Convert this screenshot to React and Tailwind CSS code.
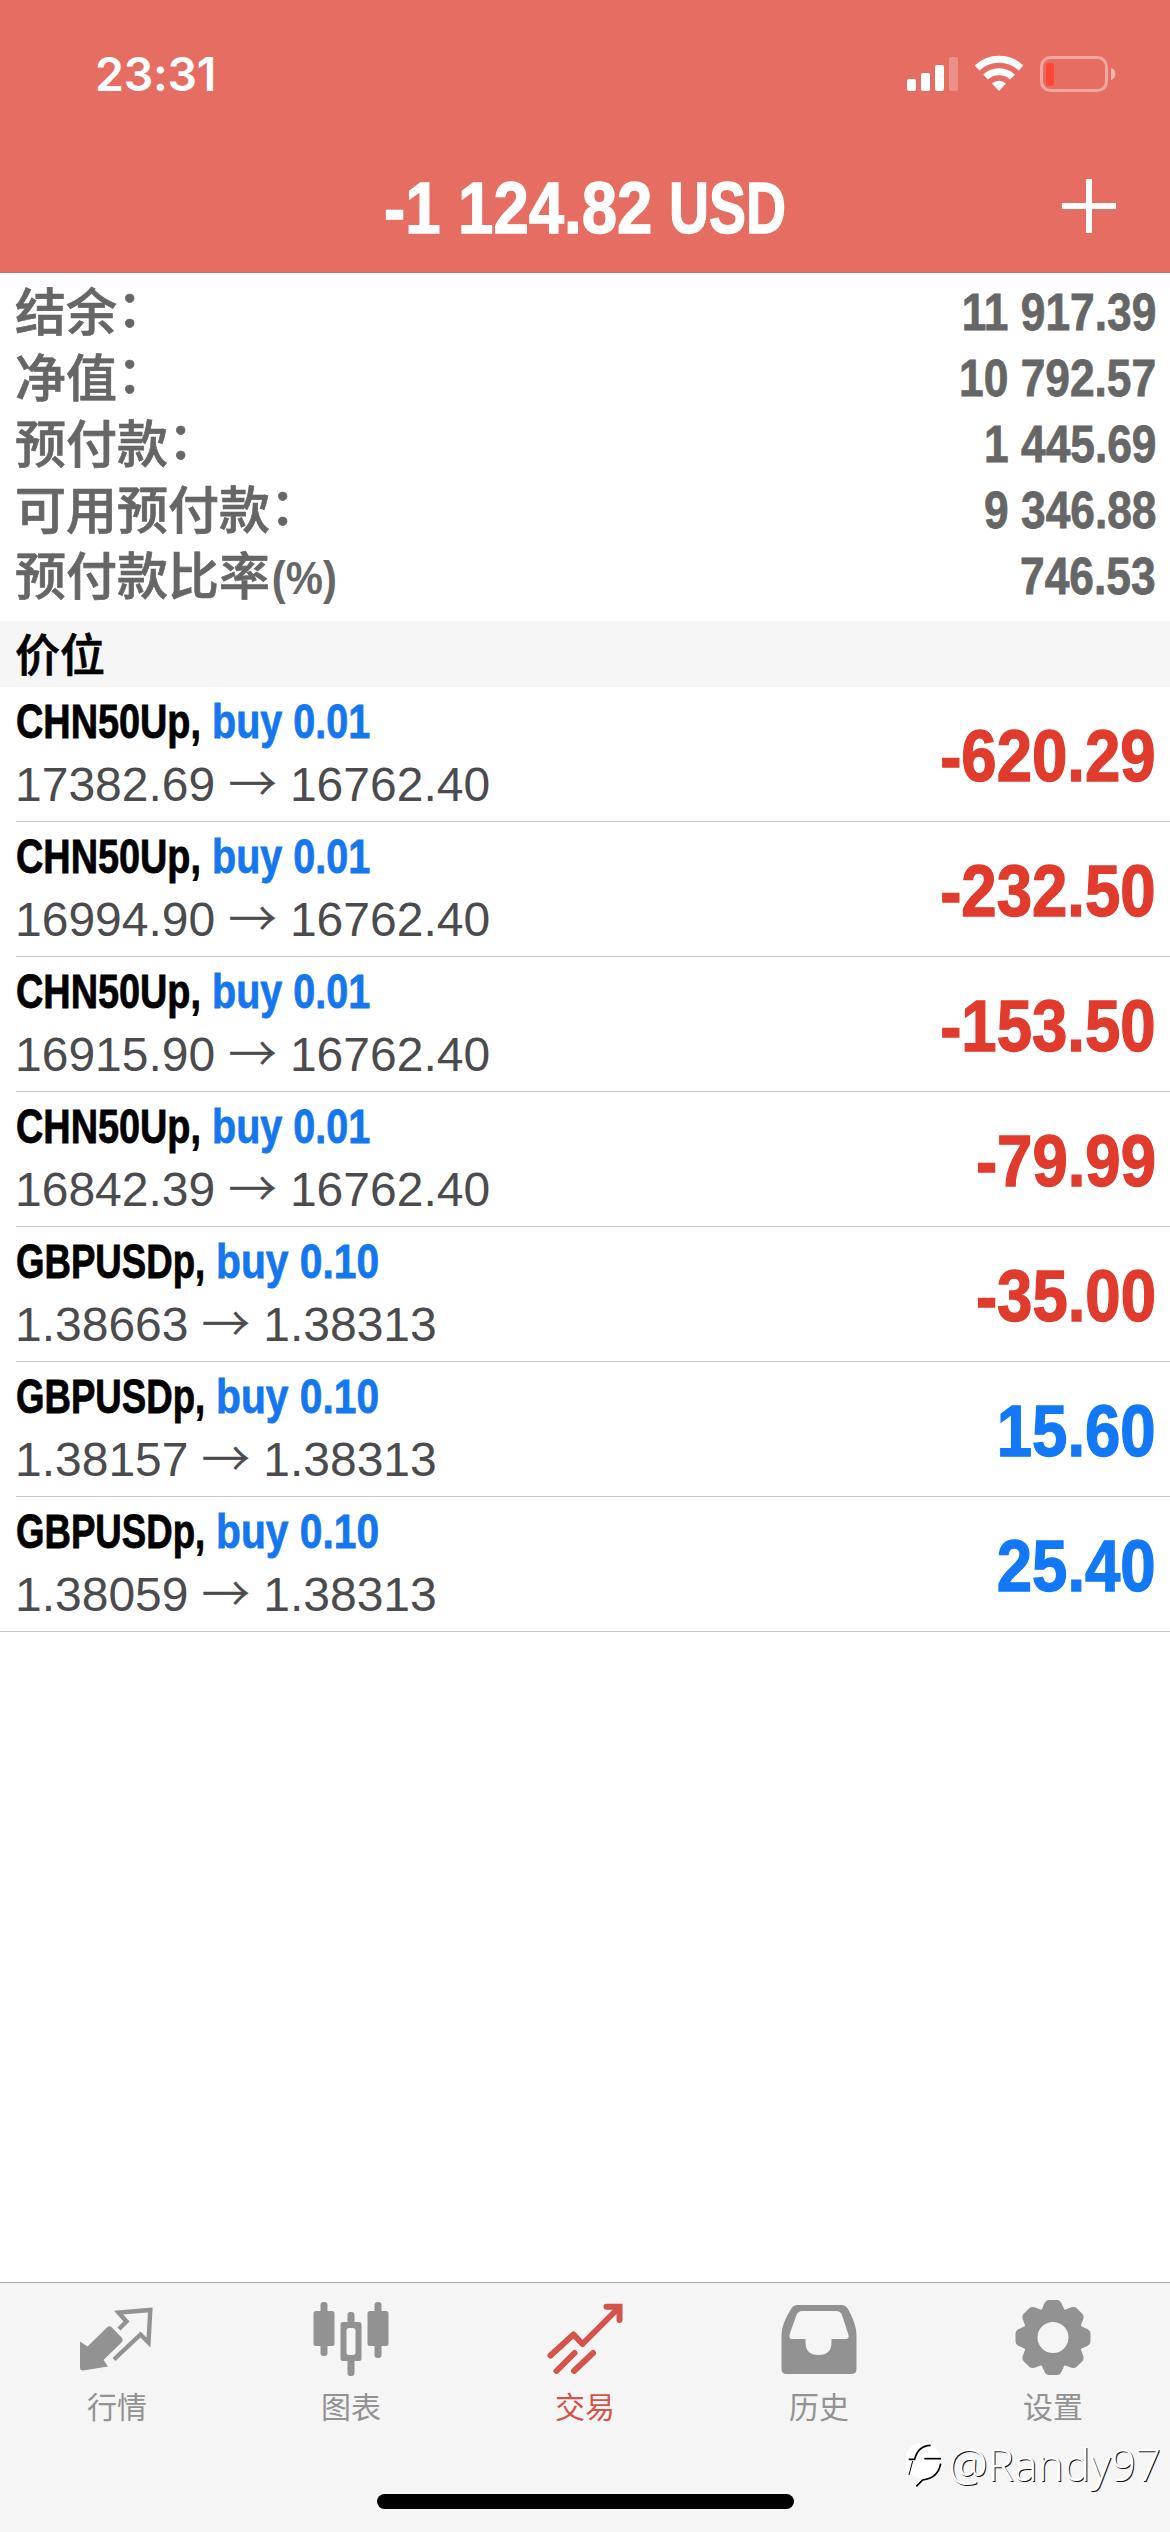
import React from 'react';

const summary = [
  { label: '结余', colon: true, value: '11 917.39' },
  { label: '净值', colon: true, value: '10 792.57' },
  { label: '预付款', colon: true, value: '1 445.69' },
  { label: '可用预付款', colon: true, value: '9 346.88' },
  { label: '预付款比率', suffix: '(%)', value: '746.53' },
];

const positions = [
  { symbol: 'CHN50Up,', side: 'buy 0.01', open: '17382.69', current: '16762.40', profit: '-620.29' },
  { symbol: 'CHN50Up,', side: 'buy 0.01', open: '16994.90', current: '16762.40', profit: '-232.50' },
  { symbol: 'CHN50Up,', side: 'buy 0.01', open: '16915.90', current: '16762.40', profit: '-153.50' },
  { symbol: 'CHN50Up,', side: 'buy 0.01', open: '16842.39', current: '16762.40', profit: '-79.99' },
  { symbol: 'GBPUSDp,', side: 'buy 0.10', open: '1.38663', current: '1.38313', profit: '-35.00' },
  { symbol: 'GBPUSDp,', side: 'buy 0.10', open: '1.38157', current: '1.38313', profit: '15.60' },
  { symbol: 'GBPUSDp,', side: 'buy 0.10', open: '1.38059', current: '1.38313', profit: '25.40' },
];

const StatusIcons = () => (
  <svg width="210" height="40" viewBox="906 54 210 40" fill="#fff">
    <rect x="907" y="79" width="9" height="12" rx="2" />
    <rect x="921" y="73" width="9" height="18" rx="2" />
    <rect x="935" y="65" width="9" height="26" rx="2" />
    <rect x="949" y="57" width="9" height="34" rx="2" opacity="0.25" />
    <g fill="none" stroke="#fff" strokeWidth="6.8">
      <path d="M977 68 A32 32 0 0 1 1021 68" />
      <path d="M985.5 77 A20 20 0 0 1 1012.5 77" />
    </g>
    <path d="M999 91 L992 83.5 A10 10 0 0 1 1006 83.5 Z" />
    <rect x="1041.5" y="57.5" width="65" height="33" rx="9" fill="none" stroke="#fff" strokeOpacity="0.4" strokeWidth="3" />
    <path d="M1111 68 C1117 70 1117 78 1111 80 Z" fillOpacity="0.5" />
    <rect x="1046" y="63" width="8" height="23" rx="2" fill="#ff453a" />
  </svg>
);

const QuotesIcon = () => (
  <svg width="80" height="80" viewBox="77 2298 80 80">
    <path d="M119 2329 L126.5 2321.5 L118.5 2312.5 L150.3 2310 L148.5 2342.5 L140.5 2334.5 L114 2359.5" fill="none" stroke="currentColor" strokeWidth="4.4" />
    <path d="M80 2341.5 L87.5 2346.5 L107.5 2327 Q109.5 2325.5 111.5 2327 L122 2338 Q123.5 2340 122 2342 L103.5 2360 L108 2366.5 L83 2370.5 Q80 2370.5 80 2367.5 Z" fill="currentColor" />
  </svg>
);

const ChartIcon = () => (
  <svg width="80" height="80" viewBox="310.5 2298 80 80" fill="currentColor">
    <rect x="313" y="2311" width="21" height="35" rx="2.5" />
    <rect x="320" y="2302" width="7" height="54" rx="3" />
    <rect x="367" y="2311" width="21" height="35" rx="2.5" />
    <rect x="374" y="2302" width="7" height="56" rx="3" />
    <path fillRule="evenodd" d="M342.5 2322 h16 q2.5 0 2.5 2.5 v34 q0 2.5 -2.5 2.5 h-16 q-2.5 0 -2.5 -2.5 v-34 q0 -2.5 2.5 -2.5 Z M348.5 2328 q-2.5 0 -2.5 2.5 v22 q0 2.5 2.5 2.5 h4 q2.5 0 2.5 -2.5 v-22 q0 -2.5 -2.5 -2.5 Z" />
    <rect x="347" y="2312" width="7" height="12" rx="3" />
    <rect x="347" y="2358" width="7" height="18" rx="3" />
  </svg>
);

const TradeIcon = () => (
  <svg width="80" height="80" viewBox="544.5 2298 80 80" fill="none" stroke="currentColor" strokeWidth="6" strokeLinecap="round">
    <path d="M550 2355.5 L573 2334.5 L582 2344 L617 2309" strokeLinejoin="round" />
    <path d="M606 2306.8 H619 V2320" />
    <path d="M612 2308 H618 V2314 Z" fill="currentColor" strokeWidth="2" />
    <path d="M556 2371 L574 2353" />
    <path d="M573.5 2371 L592.5 2353" />
  </svg>
);

const HistoryIcon = () => (
  <svg width="80" height="80" viewBox="778.5 2298 80 80" fill="currentColor">
    <path
      fillRule="evenodd"
      d="M797 2305 H841 Q845 2305 847.5 2309 Q856 2324 856 2335 V2369 Q856 2374 851 2374 H786 Q781 2374 781 2369 V2335 Q781 2324 790.5 2309 Q793 2305 797 2305 Z M802 2311 Q797.5 2311 796 2315 L789.5 2333 Q788 2339 791 2339 H805 V2342 Q805 2355 818 2355 Q831 2355 831 2342 V2339 H845 Q849 2339 848 2335 L841.5 2315 Q840 2311 835 2311 Z"
    />
  </svg>
);

const SettingsIcon = () => (
  <svg width="80" height="80" viewBox="-40 -38 80 80" fill="currentColor">
    <g transform="translate(0 1.5)">
      <path
        fillRule="evenodd"
        d="M-29 0 A29 29 0 1 1 29 0 A29 29 0 1 1 -29 0 Z M-15.5 0 A15.5 15.5 0 1 0 15.5 0 A15.5 15.5 0 1 0 -15.5 0 Z"
      />
      {[0, 45, 90, 135, 180, 225, 270, 315].map((angle) => (
        <path key={angle} transform={`rotate(${angle})`} d="M-13.5 -25 Q-11 -28 -9.5 -32 Q-7.5 -37.5 -4 -37.5 H4 Q7.5 -37.5 9.5 -32 Q11 -28 13.5 -25 Z" />
      ))}
    </g>
  </svg>
);

const tabs = [
  { label: '行情', icon: QuotesIcon },
  { label: '图表', icon: ChartIcon },
  { label: '交易', icon: TradeIcon, active: true },
  { label: '历史', icon: HistoryIcon },
  { label: '设置', icon: SettingsIcon },
];

const Header = () => (
  <header className="h-[273px] bg-[#e56d62] border-b border-[#b0757a] text-white">
    <div className="flex justify-between pt-[54px] pl-[95px] pr-[54px] h-[138px]">
      <span className="font-['Inter'] font-semibold text-[46.5px] leading-[40px] tracking-[-0.3px]">23:31</span>
      <StatusIcons />
    </div>
    <div className="flex items-center h-[136px] pl-[384px] pr-[54px]">
      <h1 className="flex font-bold text-[73px] leading-[80px] pt-[3px] whitespace-nowrap [-webkit-text-stroke:1.4px_currentColor]">
        <span className="w-[285px] origin-left scale-x-[0.87]">-1 124.82</span>
        <span className="w-[118px] origin-left scale-x-[0.76]">USD</span>
      </h1>
      <svg className="ml-auto" width="54" height="54" viewBox="0 0 54 54" stroke="#fff" strokeWidth="6">
        <path d="M27 0 V54 M0 27 H54" />
      </svg>
    </div>
  </header>
);

const Summary = () => (
  <section className="h-[348px] pt-[5px] pl-[15px] pr-[14px] text-[#666]">
    {summary.map((row) => (
      <div key={row.label} className="flex justify-between h-[66px]">
        <div className="flex pt-[3px] font-['Liberation_Sans','Noto_Sans_CJK_SC',sans-serif] font-medium text-[51px] leading-[66px] [-webkit-text-stroke:0.7px_currentColor]">
          <span>{row.label}</span>
          {row.colon && <span className="-mt-[4px]">：</span>}
          {row.suffix && <span className="pl-[2px] origin-left scale-x-[0.89] font-bold text-[47px] [-webkit-text-stroke:0px]">{row.suffix}</span>}
        </div>
        <span className="origin-right scale-x-[0.86] font-bold text-[51.5px] leading-[68px] [-webkit-text-stroke:0.8px_currentColor]">{row.value}</span>
      </div>
    ))}
  </section>
);

const Position = ({ item, last }) => {
  const isPound = item.symbol.startsWith('GBP');

  return (
    <div className={last ? '' : 'pl-4'}>
      <div className={`flex items-center justify-between h-[135px] pr-[14px] border-b border-[#c8c7cc] ${last ? 'pl-4' : ''}`}>
        <div className="flex flex-col">
          <div className="flex font-bold text-[48.5px] leading-[62px] whitespace-nowrap [-webkit-text-stroke:0.8px_currentColor]">
            <span className={`origin-left text-black ${isPound ? 'w-[200px] scale-x-[0.755]' : 'w-[196px] scale-x-[0.78]'}`}>{item.symbol}</span>
            <span className={`origin-left text-[#1577ee] ${isPound ? 'scale-x-[0.84]' : 'scale-x-[0.815]'}`}>{item.side}</span>
          </div>
          <div className="-ml-px -mt-[3px] mb-[3px] text-[48px] leading-[62px] text-[#4b4b4e] whitespace-nowrap">
            {item.open} <span className="font-['Liberation_Sans_Narrow','Noto_Sans_CJK_SC'] font-light [-webkit-text-stroke:0.6px_currentColor]">→</span> {item.current}
          </div>
        </div>
        <span className={`pt-[4px] origin-right scale-x-[0.87] font-bold text-[73px] leading-[80px] [-webkit-text-stroke:1.4px_currentColor] ${item.profit.startsWith('-') ? 'text-[#e03b2d]' : 'text-[#1278f5]'}`}>
          {item.profit}
        </span>
      </div>
    </div>
  );
};

const TabBar = () => (
  <nav className="mt-auto h-[250px] bg-[#f5f5f5] border-t border-[#a9a9a9]">
    <div className="flex h-[211px]">
      {tabs.map(({ label, icon: Icon, active }) => (
        <div key={label} className={`flex-1 flex flex-col items-center pt-[15px] ${active ? 'text-[#d4534a]' : 'text-[#929292]'}`}>
          <Icon />
          <span className="mt-[5px] font-['Noto_Sans_CJK_SC',sans-serif] text-[30px] leading-[44px]">{label}</span>
        </div>
      ))}
    </div>
    <div className="mx-auto w-[417px] h-[15px] rounded-full bg-black" />
  </nav>
);

const Watermark = () => (
  <div className="absolute right-[9px] bottom-[40px] flex items-center text-white">
    <svg width="42" height="50" viewBox="30 30 126 150" fill="none" stroke="#000" strokeWidth="5">
      <circle cx="80" cy="95" r="54" fill="#fff" stroke="none" />
      <path d="M38 91 H56 Q66 50 104 49" />
      <path d="M85 89 H135" />
      <path d="M50 96 L39 138" strokeWidth="3" />
      <path d="M134 104 Q126 148 80 153 L61 172" />
    </svg>
    <span className="font-['Noto_Sans'] font-light text-[44px] leading-[56px] [text-shadow:1px_1px_0_#111]">@Randy97</span>
  </div>
);

const App = () => {
  return (
    <div className="relative flex flex-col w-[1170px] h-[2532px] bg-white overflow-hidden font-['Liberation_Sans',Arial,sans-serif]">
      <Header />
      <Summary />
      <h2 className="h-[66px] px-[15px] bg-[#f6f6f6] font-['Noto_Sans_CJK_SC',sans-serif] font-medium text-[45px] leading-[64px] text-black [-webkit-text-stroke:0.7px_currentColor]">价位</h2>
      <main>
        {positions.map((item, i) => (
          <Position key={i} item={item} last={i === positions.length - 1} />
        ))}
      </main>
      <TabBar />
      <Watermark />
    </div>
  );
};

export default App;
